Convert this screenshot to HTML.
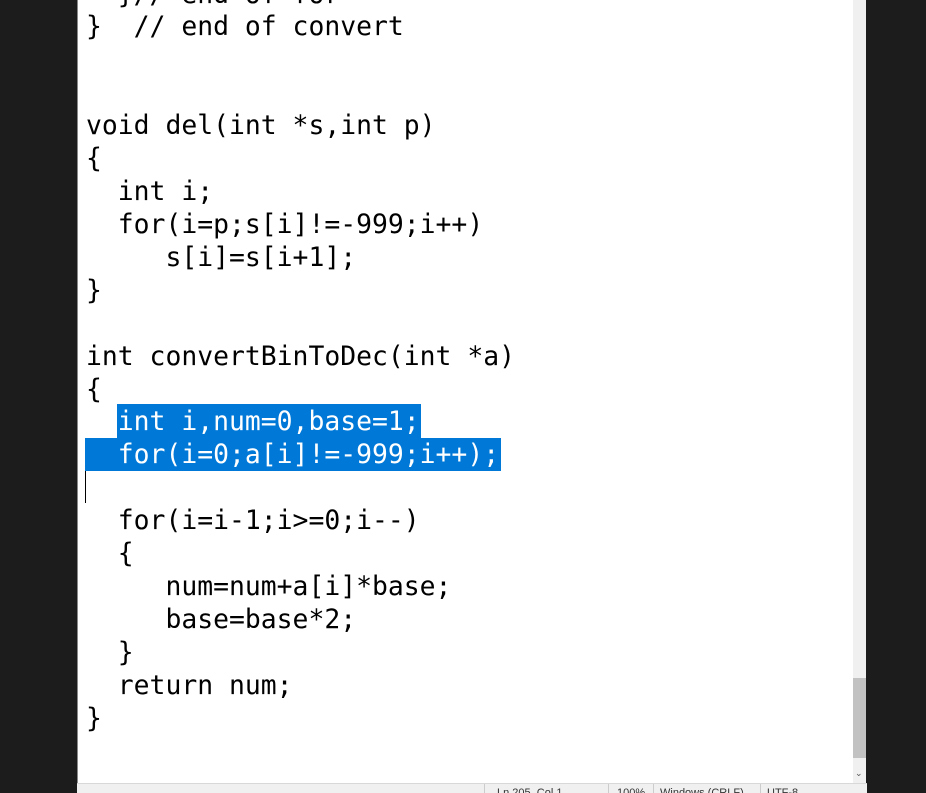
<!DOCTYPE html>
<html><head><style>
html,body{margin:0;padding:0;width:926px;height:792px;overflow:hidden;background:#1c1c1c}
#ed{position:absolute;left:77px;top:0;width:776px;height:783px;background:#fff;overflow:hidden}
#ed::before{content:"";position:absolute;left:0;top:0;width:1px;height:783px;background:#888}
.l{position:absolute;left:9px;font-family:"DejaVu Sans Mono","Liberation Mono",monospace;font-size:26.4px;line-height:33px;white-space:pre;color:#000;height:33px}
.sel{position:absolute;background:#0078d7}
#sb{position:absolute;left:853px;top:0;width:13px;height:783px;background:#f0f0f0}
#th{position:absolute;left:853px;top:678px;width:13px;height:80px;background:#c2c2c2}
#st{position:absolute;left:77px;top:783px;width:790px;height:9px;background:#f0f0f0;border-top:1px solid #d8d8d8;font-family:"Liberation Sans",sans-serif;font-size:11px;color:#333;overflow:hidden}
#st span{position:absolute;top:3px;white-space:pre}
.sep{position:absolute;top:0;width:1px;height:9px;background:#ccc}
</style></head><body>
<div id="ed">
<div class="sel" style="left:40px;top:404px;width:304px;height:34px"></div>
<div class="sel" style="left:8px;top:438px;width:416px;height:33px"></div>
<div style="position:absolute;left:8px;top:471px;width:1px;height:32px;background:#000"></div>
<div class="l" style="top:-22px">  }// end of for</div>
<div class="l" style="top:10px">}  // end of convert</div>
<div class="l" style="top:109px">void del(int *s,int p)</div>
<div class="l" style="top:142px">{</div>
<div class="l" style="top:175px">  int i;</div>
<div class="l" style="top:208px">  for(i=p;s[i]!=-999;i++)</div>
<div class="l" style="top:241px">     s[i]=s[i+1];</div>
<div class="l" style="top:274px">}</div>
<div class="l" style="top:340px">int convertBinToDec(int *a)</div>
<div class="l" style="top:373px">{</div>
<div class="l" style="top:405px;color:#fff">  int i,num=0,base=1;</div>
<div class="l" style="top:438px;color:#fff">  for(i=0;a[i]!=-999;i++);</div>
<div class="l" style="top:504px">  for(i=i-1;i&gt;=0;i--)</div>
<div class="l" style="top:537px">  {</div>
<div class="l" style="top:570px">     num=num+a[i]*base;</div>
<div class="l" style="top:603px">     base=base*2;</div>
<div class="l" style="top:636px">  }</div>
<div class="l" style="top:669px">  return num;</div>
<div class="l" style="top:702px">}</div>
</div>
<div id="sb"></div>
<div id="th"></div>
<div style="position:absolute;left:855px;top:769px;font-family:'DejaVu Sans',sans-serif;font-size:9px;color:#555">&#8964;</div>
<div id="st">
<div class="sep" style="left:407px"></div><span style="left:420px">Ln 205, Col 1</span>
<div class="sep" style="left:531px"></div><span style="left:540px">100%</span>
<div class="sep" style="left:576px"></div><span style="left:583px">Windows (CRLF)</span>
<div class="sep" style="left:683px"></div><span style="left:690px">UTF-8</span>
</div>
</body></html>
